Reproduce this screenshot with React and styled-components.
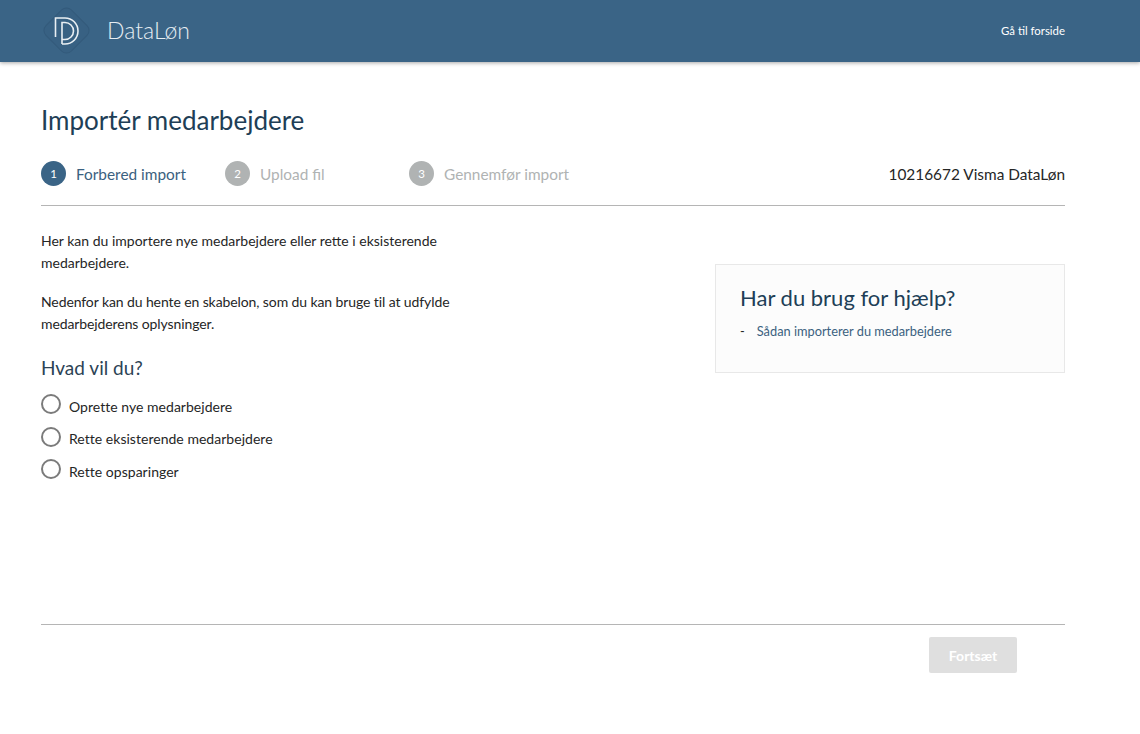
import styled, { createGlobalStyle } from 'styled-components'

const GlobalStyle = createGlobalStyle`
  html, body {
    margin: 0;
    padding: 0;
    background: #fff;
    font-family: Lato, "Liberation Sans", sans-serif;
    color: #252626;
  }
  * { box-sizing: border-box; }
`

const Header = styled.header`
  height: 62px;
  background: #3a6486;
  box-shadow: 0 1px 4px rgba(0, 0, 0, 0.35);
  display: flex;
  align-items: center;
  justify-content: space-between;
  padding: 0 75px 0 43px;
  color: #fff;
`

const Brand = styled.div`
  display: flex;
  align-items: center;
  gap: 17px;
`

const LogoMark = styled.svg`
  overflow: visible;
`

const BrandName = styled.span`
  font-size: 23px;
  font-weight: 300;
  color: #e6edf2;
  position: relative;
  top: -1px;
`

const HomeLink = styled.a`
  font-size: 11.4px;
  color: #fff;
  position: relative;
  top: -1px;
`

const Main = styled.main`
  padding: 41px 75px 0 41px;
`

const Title = styled.h1`
  margin: 0;
  font-size: 26px;
  line-height: 34px;
  font-weight: 400;
  color: #203e56;
`

const StepBar = styled.div`
  display: flex;
  align-items: center;
  justify-content: space-between;
  margin-top: 20px;
  height: 49px;
  padding-bottom: 16px;
  border-bottom: 1px solid #b5b5b5;
`

const Steps = styled.div`
  display: flex;
`

const Step = styled.div`
  width: 184px;
  display: flex;
  align-items: center;
  gap: 10px;
  font-size: 15.4px;
  color: ${p => (p.$active ? '#3b6180' : '#b0b3b3')};
`

const StepLabel = styled.span`
  position: relative;
  top: 1px;
`

const StepNumber = styled.span`
  width: 25px;
  height: 25px;
  border-radius: 50%;
  background: ${p => (p.$active ? '#3a6486' : '#b0b3b3')};
  color: #fff;
  font-size: 11.5px;
  display: flex;
  align-items: center;
  justify-content: center;
`

const Company = styled.div`
  font-size: 15.4px;
  color: #252626;
  position: relative;
  top: 1px;
`

const Content = styled.div`
  display: flex;
  justify-content: space-between;
  align-items: flex-start;
  height: 419px;
  border-bottom: 1px solid #b5b5b5;
`

const Left = styled.div`
  width: 420px;
  padding-top: 24px;
`

const Paragraph = styled.p`
  margin: 0 0 17.8px;
  font-size: 14px;
  line-height: 21.6px;
  color: #252626;
  letter-spacing: ${p => p.$tight ? '-0.1px' : '0'};
`

const Question = styled.h2`
  margin: 20.8px 0 10px;
  font-size: 19px;
  line-height: 26px;
  font-weight: 400;
  color: #2c4355;
`

const RadioRow = styled.label`
  display: flex;
  align-items: center;
  height: 32.5px;
  gap: 8px;
  font-size: 14px;
  position: relative;
  top: -1px;
`

const RadioCircle = styled.span`
  width: 20px;
  height: 20px;
  border-radius: 50%;
  border: 2px solid #7b7b7b;
  background: #fff;
  position: relative;
  top: -2px;
`

const RadioText = styled.span`
  letter-spacing: 0.03px;
`

const HelpBox = styled.aside`
  width: 350px;
  height: 109px;
  margin-top: 58px;
  padding: 19px 24px;
  background: #fcfcfc;
  border: 1px solid #e8e8e8;
`

const HelpTitle = styled.h3`
  margin: 0 0 10px;
  font-size: 22px;
  line-height: 28px;
  font-weight: 400;
  color: #203e56;
`

const HelpItem = styled.div`
  display: flex;
  gap: 12px;
  font-size: 12.8px;
  line-height: 18px;
  color: #3b6180;
`

const HelpDash = styled.span`
  color: #252626;
`

const Footer = styled.div`
  display: flex;
  justify-content: flex-end;
  padding: 12px 48px 0 0;
`

const ContinueButton = styled.button`
  width: 88px;
  height: 36px;
  border: none;
  border-radius: 2px;
  background: #dfdfdf;
  color: #fff;
  font-family: inherit;
  font-size: 14px;
  font-weight: 700;
`

const Logo = () => (
  <LogoMark width="47" height="50" viewBox="0 0 47 50" fill="none">
    <rect x="5.5" y="6.5" width="36" height="36" rx="7" transform="rotate(45 23.5 24.5)" fill="#386183" stroke="#335a7b" />
    <path d="M12.5 31V12H22a13 13 0 0 1 0 26H19" stroke="#e9eff3" strokeWidth="1.6" />
    <path d="M19 38V16.5H22a8.5 8.5 0 0 1 0 17H19" stroke="#e9eff3" strokeWidth="1.6" />
  </LogoMark>
)

const steps = ['Forbered import', 'Upload fil', 'Gennemfør import']

export default function App() {
  return (
    <>
      <GlobalStyle />
      <Header>
        <Brand>
          <Logo />
          <BrandName>DataLøn</BrandName>
        </Brand>
        <HomeLink>Gå til forside</HomeLink>
      </Header>
      <Main>
        <Title>Importér medarbejdere</Title>
        <StepBar>
          <Steps>
            {steps.map((s, i) => (
              <Step key={s} $active={i === 0}>
                <StepNumber $active={i === 0}>{i + 1}</StepNumber>
                <StepLabel>{s}</StepLabel>
              </Step>
            ))}
          </Steps>
          <Company>10216672 Visma DataLøn</Company>
        </StepBar>
        <Content>
          <Left>
            <Paragraph>Her kan du importere nye medarbejdere eller rette i eksisterende medarbejdere.</Paragraph>
            <Paragraph $tight>Nedenfor kan du hente en skabelon, som du kan bruge til at udfylde medarbejderens oplysninger.</Paragraph>
            <Question>Hvad vil du?</Question>
            {['Oprette nye medarbejdere', 'Rette eksisterende medarbejdere', 'Rette opsparinger'].map(t => (
              <RadioRow key={t}>
                <RadioCircle />
                <RadioText>{t}</RadioText>
              </RadioRow>
            ))}
          </Left>
          <HelpBox>
            <HelpTitle>Har du brug for hjælp?</HelpTitle>
            <HelpItem>
              <HelpDash>-</HelpDash>
              <span>Sådan importerer du medarbejdere</span>
            </HelpItem>
          </HelpBox>
        </Content>
        <Footer>
          <ContinueButton disabled>Fortsæt</ContinueButton>
        </Footer>
      </Main>
    </>
  )
}
